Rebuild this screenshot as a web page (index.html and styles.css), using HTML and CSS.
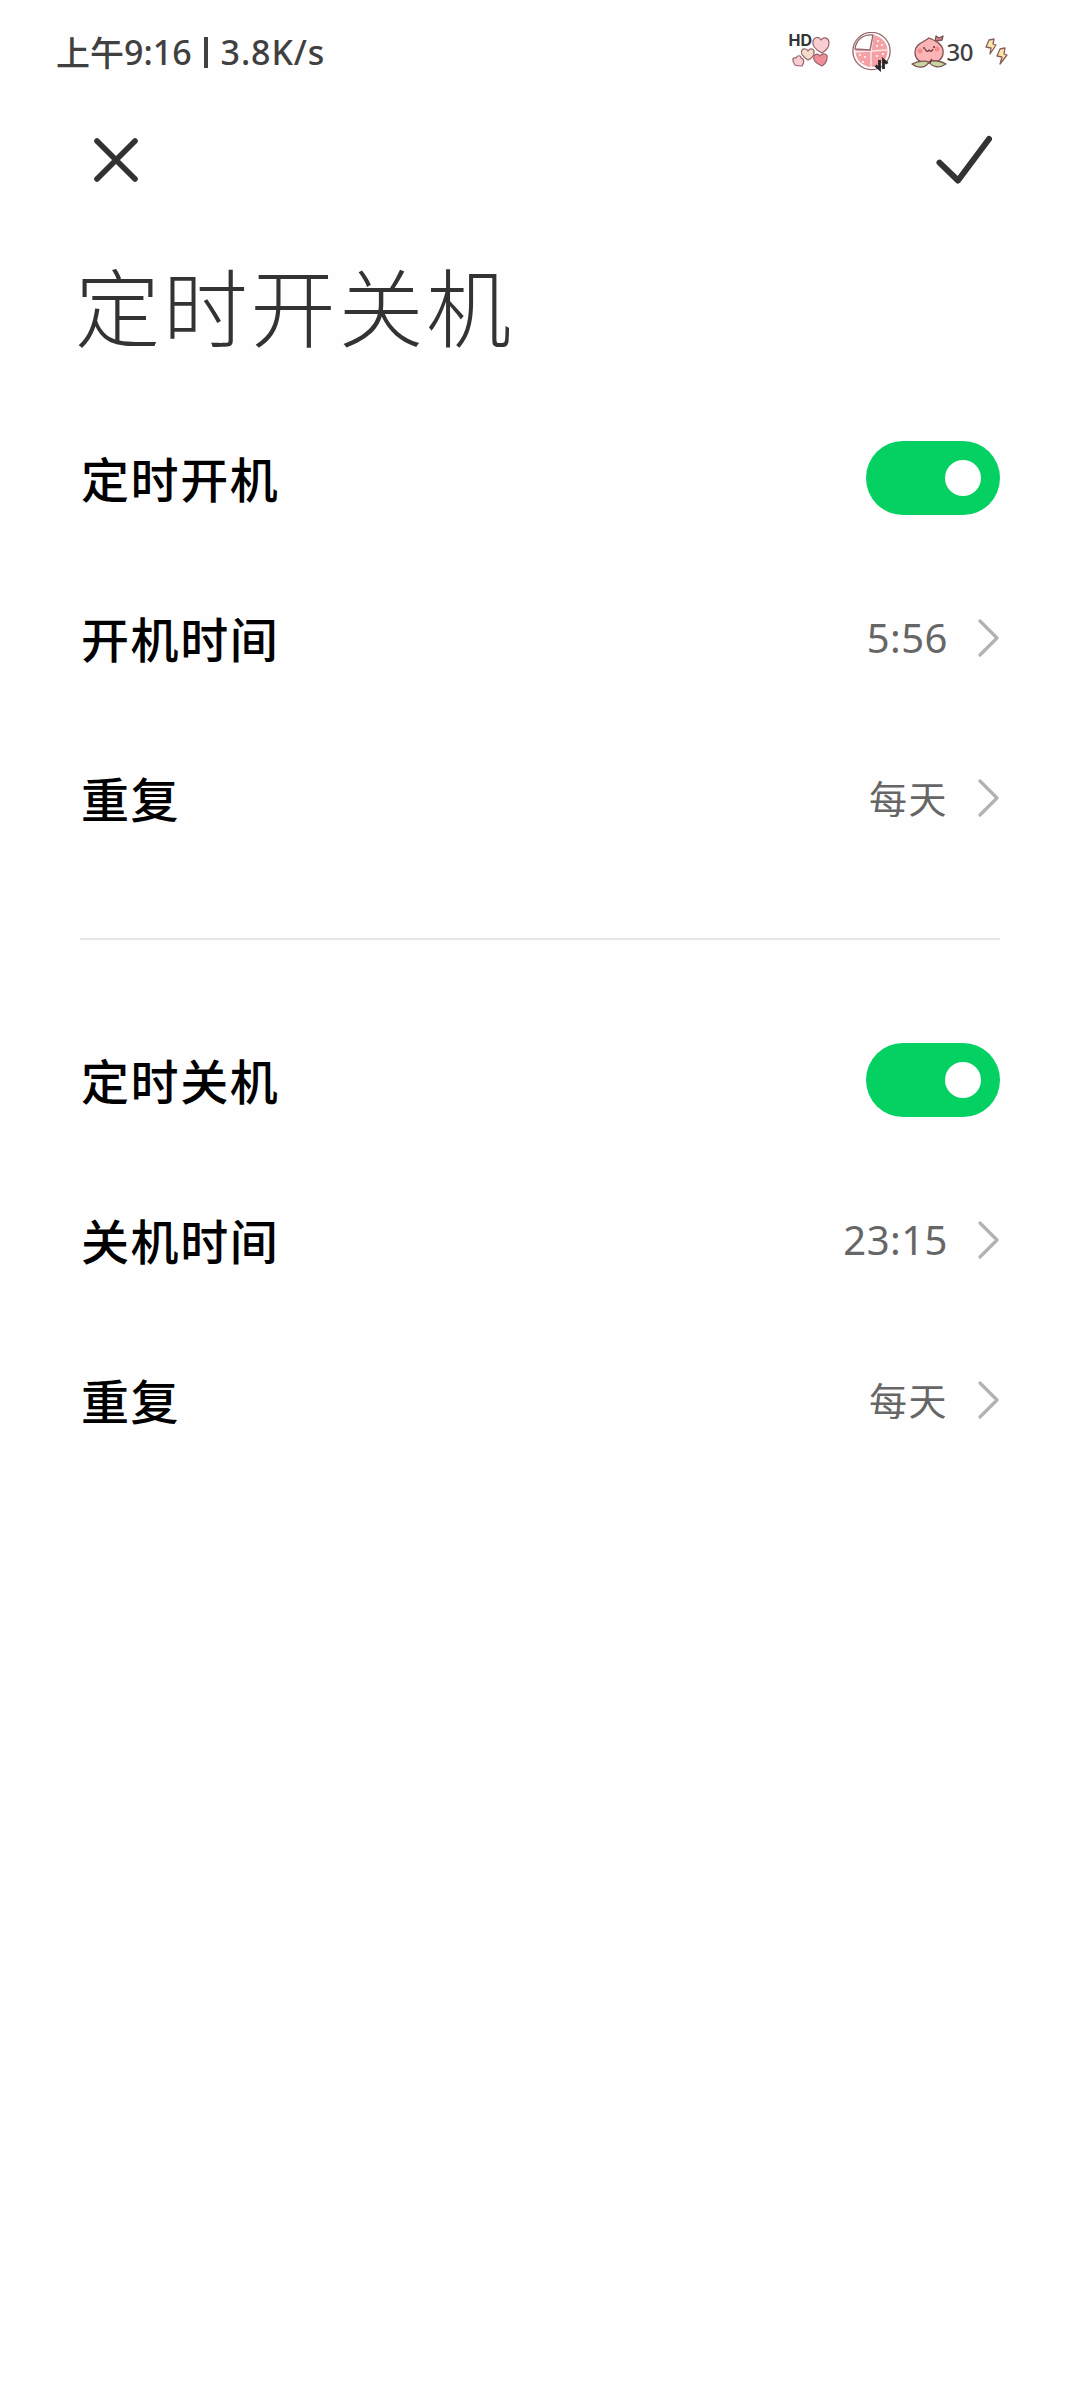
FILE: index.html
```html
<!DOCTYPE html>
<html lang="zh-CN">
<head>
<meta charset="utf-8">
<title>定时开关机</title>
<link rel="stylesheet" href="styles.css">
</head>
<body>
<div class="screen">
  <div class="status">
    <span class="status-text"><span class="status-cjk">上午</span><span>9:16</span><span class="bar"></span><span class="speed">3.8K/s</span></span>
    <div class="status-icons">
      <div class="signal">
        <svg width="40" height="34" viewBox="0 0 40 34" stroke="#94666b" stroke-width="1.2" stroke-linejoin="round">
          <path fill="#f9cdd2" d="M31 17C23 13 21 9 22 5C23 1 28 0 30 4C33 0 38 2 38 7C38 11 36 14 31 17Z"/>
          <path fill="#f5dccb" d="M17 24C11 20 9 17 11 14C13 12 16 13 17 15C19 11 24 13 23 17C23 20 21 22 17 24Z"/>
          <path fill="#f9cdd2" d="M4 29C1 25 1 21 5 22C6 19 10 19 10 22C14 23 13 27 11 30C8 30 6 30 4 29Z"/>
          <path fill="#f28e98" d="M31 30C24 27 22 23 23 20C25 17 28 18 29 20C32 16 37 18 36 22C36 26 34 28 31 30Z"/>
        </svg>
        <span class="hd">HD</span>
      </div>
      <svg class="wifi" width="42" height="40" viewBox="0 0 42 40">
        <circle cx="20.500" cy="19" r="18.600" fill="#fff" stroke="#94666b" stroke-width="1.300"/>
        <circle cx="20.500" cy="19" r="16" fill="#f5a0a4"/>
        <path d="M20 19L22 3M20 19V35M4 20L36 18" stroke="#fde3e3" stroke-width="1.600"/>
        <path d="M19 18L22 3C12 2 5 8 4 17Z" fill="#fff" stroke="#94666b" stroke-width="1.300" stroke-linejoin="round"/>
        <g fill="#fff"><circle cx="27" cy="9" r="1"/><circle cx="31" cy="13" r="1"/><circle cx="26" cy="14" r="1"/><circle cx="9" cy="23" r="1"/><circle cx="14" cy="25" r="1"/><circle cx="12" cy="30" r="1"/><circle cx="26" cy="24" r="1"/><circle cx="32" cy="22" r="1"/></g>
        <path d="M28.500 28V37L24.500 33.500M32.500 37V28L36.500 31.500" fill="none" stroke="#292627" stroke-width="2.800"/>
      </svg>
      <div class="battery">
        <svg width="36" height="34" viewBox="0 0 36 34" stroke="#7d5052" stroke-width="1.300" stroke-linejoin="round">
          <path fill="#d98a90" d="M24 7L25 1L28 3L32 1L31 5L25 6"/>
          <path fill="#fbb5b7" d="M18 3C13 7 4 9 4 17C4 24 9 28 18 28C28 28 33 23 32 15C31 9 25 6 18 3Z"/>
          <path fill="#c7d6a2" d="M18 27C11 25 5 27 1 29C7 34 15 33 18 27C22 25 29 26 35 29C29 33 22 33 18 27Z"/>
          <path fill="none" stroke="#63383b" d="M19 28Q19 26 21 24M14 14Q16 18 18 15Q20 18 22 14"/>
          <circle cx="13" cy="13" r="1" fill="#63383b" stroke="none"/><circle cx="23" cy="12" r="1" fill="#63383b" stroke="none"/>
          <circle cx="9" cy="16" r="2.500" fill="#f58c8b" stroke="none"/><circle cx="26" cy="14" r="2.500" fill="#f58c8b" stroke="none"/>
        </svg>
        <span>30</span>
      </div>
      <svg class="charge" width="24" height="28" viewBox="0 0 24 28" fill="#fbe6ad" stroke="#875f59" stroke-width="1.300" stroke-linejoin="round">
        <path d="M4 2L9 1L8 6L11 7L5 16L6 10L1 9Z"/><path d="M15 11L20 10L19 16L22 17L15 26L17 19L12 18Z"/>
      </svg>
    </div>
  </div>
  <header class="actions">
    <svg width="46" height="46" viewBox="0 0 46 46"><path d="M4 4L42 42M42 4L4 42" fill="none" stroke="#333" stroke-width="5.600" stroke-linecap="round"/></svg>
    <svg width="56" height="50" viewBox="0 0 56 50"><path d="M3.500 27.700L22 45.500L53 4" fill="none" stroke="#333" stroke-width="6" stroke-linecap="round" stroke-linejoin="round"/></svg>
  </header>
  <h1 class="title">定时开关机</h1>
  <section class="group">
    <div class="row"><span class="label">定时开机</span><span class="toggle"></span></div>
    <div class="row"><span class="label">开机时间</span><span class="value num">5:56</span><svg class="chev" width="22" height="40" viewBox="0 0 22 40"><path d="M2 3L19 20L2 37"/></svg></div>
    <div class="row"><span class="label">重复</span><span class="value">每天</span><svg class="chev" width="22" height="40" viewBox="0 0 22 40"><path d="M2 3L19 20L2 37"/></svg></div>
  </section>
  <hr class="divider">
  <section class="group">
    <div class="row"><span class="label">定时关机</span><span class="toggle"></span></div>
    <div class="row"><span class="label">关机时间</span><span class="value num">23:15</span><svg class="chev" width="22" height="40" viewBox="0 0 22 40"><path d="M2 3L19 20L2 37"/></svg></div>
    <div class="row"><span class="label">重复</span><span class="value">每天</span><svg class="chev" width="22" height="40" viewBox="0 0 22 40"><path d="M2 3L19 20L2 37"/></svg></div>
  </section>
</div>
</body>
</html>
```
FILE: styles.css
```css
* { box-sizing: border-box; }
body { margin: 0; background: #fefefe; font-family: "Noto Sans", "Noto Sans CJK SC", sans-serif; }
svg { display: block; flex: none; }
.screen { width: 1080px; height: 2400px; display: flex; flex-direction: column; }
.status { height: 104px; padding: 0 71px 0 56px; display: flex; justify-content: space-between; align-items: center; color: #404040; }
.status-text { display: flex; align-items: center; font-size: 34px; font-weight: 500; line-height: 48px; white-space: nowrap; }
.status-cjk { font-family: "Noto Sans CJK SC", sans-serif; }
.speed { letter-spacing: .9px; }
.bar { width: 4px; height: 31px; background: #404040; margin: 0 13px 0 12px; }
.status-icons { display: flex; align-items: center; }
.signal { position: relative; width: 40px; margin-right: 20px; padding-top: 2px; }
.hd { position: absolute; left: -2px; top: -4px; font: 700 16px/20px Inter, sans-serif; color: #333; }
.wifi { margin-right: 18px; }
.battery { display: flex; align-items: center; margin-right: 12px; font-size: 24px; line-height: 28px; font-weight: 500; letter-spacing: -.5px; }
.actions { height: 112px; padding: 0 88px 0 93px; display: flex; justify-content: space-between; align-items: center; }
.title { margin: 0; height: 182px; padding: 28px 75px 0; font: 300 85px/120px "Noto Sans CJK SC", sans-serif; letter-spacing: 2.8px; color: #333; }
.group { padding: 0 80px; }
.row { height: 160px; display: flex; align-items: center; }
.label { flex: 1; padding: 0 0 3px 1px; font: 500 48px/72px "Noto Sans CJK SC", sans-serif; letter-spacing: 1.6px; color: #000; }
.toggle { width: 134px; height: 74px; border-radius: 37px; background: #04d162; display: flex; align-items: center; justify-content: flex-end; padding-right: 19px; }
.toggle::before { content: ""; width: 36px; height: 36px; border-radius: 50%; background: #fff; }
.value { padding-bottom: 2px; font: 400 38px/56px "Noto Sans CJK SC", sans-serif; letter-spacing: 1.5px; color: #666; margin-right: 30px; }
.num { padding: 0; font: 400 40px/56px "Noto Sans", sans-serif; letter-spacing: .5px; }
.chev path { fill: none; stroke: #b2b2b2; stroke-width: 3.2; stroke-linecap: round; stroke-linejoin: round; }
.divider { width: 920px; height: 2px; margin: 60px 80px; border: 0; background: #e4e4e4; }
```
